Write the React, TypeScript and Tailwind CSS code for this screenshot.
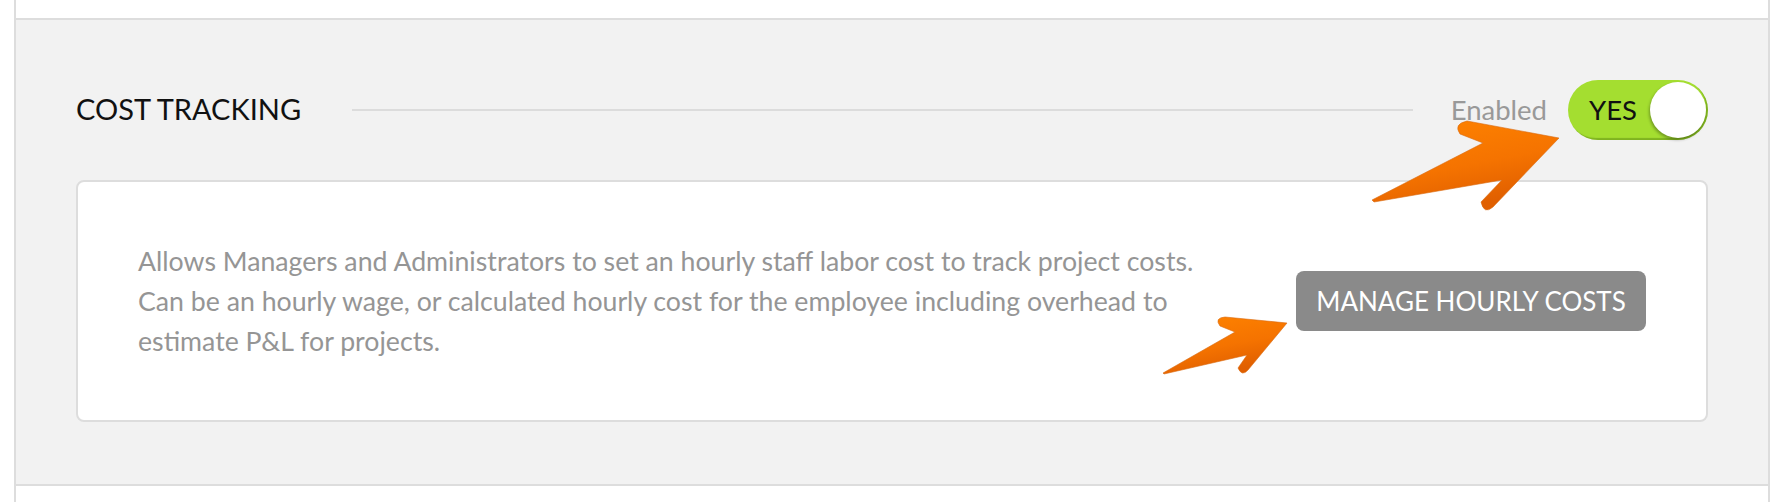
import React from 'react';

const font = { fontFamily: 'Lato, "Noto Sans", sans-serif' };

function Arrow({ className, d, w, h, id }: { className: string; d: string; w: number; h: number; id: string }) {
  return (
    <svg className={className} width={w} height={h} viewBox={`0 0 ${w} ${h}`}>
      <defs>
        <linearGradient id={id} x1="0" y1="0" x2="0.4" y2="1">
          <stop offset="0" stopColor="#ff8400" />
          <stop offset="0.6" stopColor="#f57300" />
          <stop offset="1" stopColor="#e05f00" />
        </linearGradient>
      </defs>
      <path d={d} fill={`url(#${id})`} stroke="#d96a10" strokeWidth="0.6" strokeLinejoin="round" />
    </svg>
  );
}

export default function App() {
  return (
    <div className="relative h-[502px] w-full bg-white" style={font}>
      <div className="ml-[14px] mr-[18px] h-full border-x-2 border-[#dddddd]">
        {/* previous section */}
        <div className="h-[18px] bg-white" />

        {/* cost tracking */}
        <section className="border-y-2 border-[#dddddd] bg-[#f2f2f2] px-[60px] pt-[60px] pb-[62px]">
          <div className="flex h-[60px] items-center">
            <h2 className="-mt-[3px] text-[29px] leading-none text-[#111]">COST TRACKING</h2>
            <div className="ml-[51px] mr-[38px] h-[2px] flex-1 bg-[#dcdcdc]" />
            <span className="text-[27.5px] text-[#999]">Enabled</span>
            <button className="relative ml-[21px] flex h-[60px] w-[140px] items-center rounded-full bg-[#a4de30] pl-[21px] shadow-[inset_-2px_-2px_1px_rgba(60,100,0,0.35)]">
              <span className="text-[27.5px] leading-none text-[#111]">YES</span>
              <span className="absolute right-[2px] top-[2px] h-[56px] w-[56px] rounded-full bg-white shadow-[-1px_2px_3px_rgba(0,0,0,0.3)]" />
            </button>
          </div>

          <div className="mt-[40px] flex items-center justify-between rounded-[8px] border-2 border-[#dddddd] bg-white px-[60px] py-[59px]">
            <p className="text-[26.7px] leading-[40px] text-[#959595]">
              Allows Managers and Administrators to set an hourly staff labor cost to track project costs.
              <br />
              Can be an hourly wage, or calculated hourly cost for the employee including overhead to
              <br />
              estimate P&amp;L for projects.
            </p>
            <button className="flex h-[60px] w-[350px] shrink-0 items-center justify-center rounded-[8px] bg-[#8a8a8a] text-[26px] text-white">
              MANAGE HOURLY COSTS
            </button>
          </div>
        </section>

        <div className="bg-white" />
      </div>

      {/* annotation arrows */}
      <Arrow
        id="arrowA"
        className="absolute left-[1360px] top-[100px]"
        w={220}
        h={120}
        d="M12 100 L123 43 L100 34 Q93 24 107 21 L199 38 L133 107 Q124 115 121 102 L142 80 L14 102 Z"
      />
      <Arrow
        id="arrowB"
        className="absolute left-[1150px] top-[290px]"
        w={160}
        h={100}
        d="M13 83 L85 42 L70 36 Q64 28 75 27 L137 33 L98 80 Q92 87 88 78 L97 65 L14 84 Z"
      />
    </div>
  );
}
